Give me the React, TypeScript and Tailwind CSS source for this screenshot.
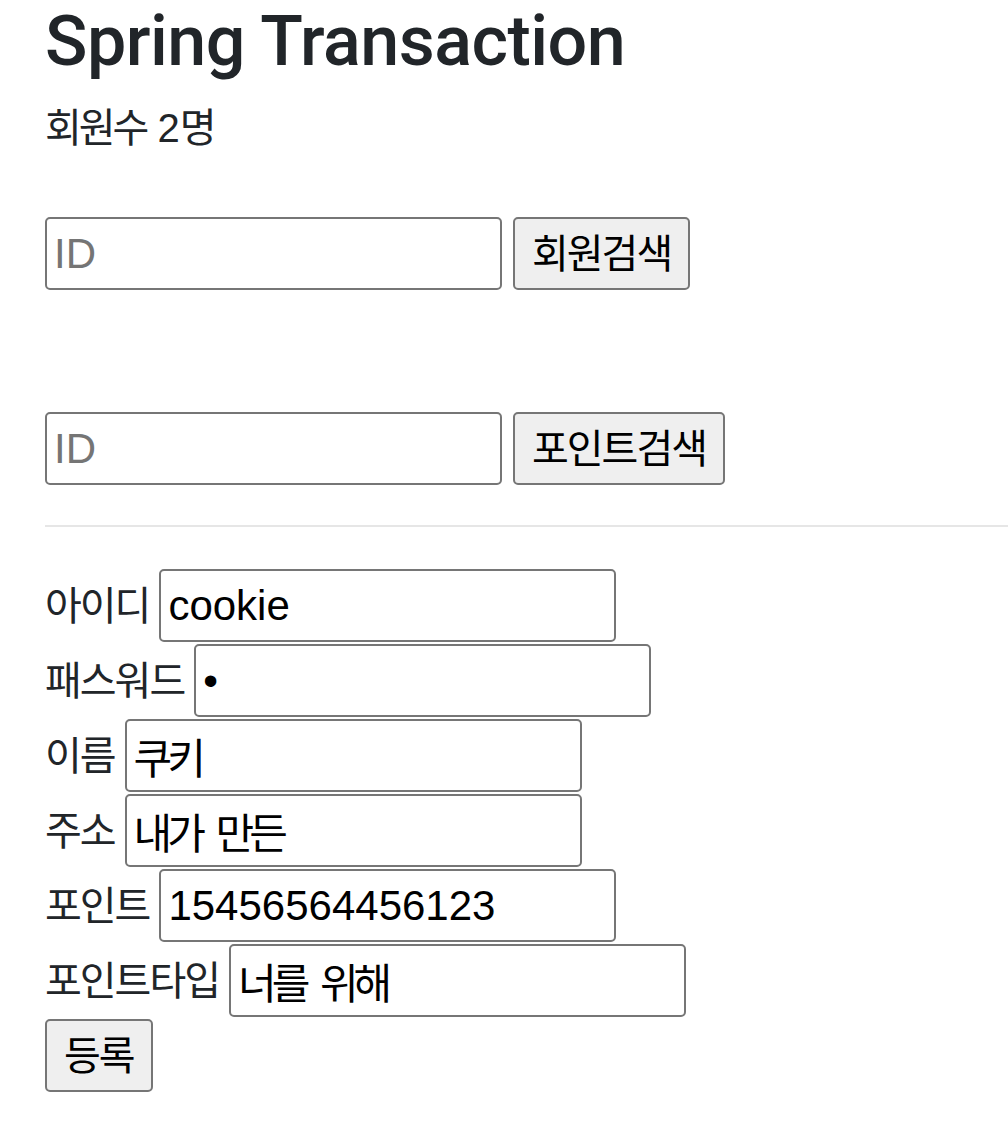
const FONT = "font-['Liberation_Sans','Noto_Sans_CJK_KR',sans-serif]"

const FIELDS = [
  { label: '아이디', value: 'cookie', type: 'text', ko: false },
  { label: '패스워드', value: 'a', type: 'password', ko: false },
  { label: '이름', value: '쿠키', type: 'text', ko: true },
  { label: '주소', value: '내가 만든', type: 'text', ko: true },
  { label: '포인트', value: '15456564456123', type: 'text', ko: false },
  { label: '포인트타입', value: '너를 위해', type: 'text', ko: true },
]

const inputCls =
  "box-border h-[73px] w-[457px] shrink-0 rounded-[5px] border-2 border-[#767676] bg-white pl-[7px] text-[42px] text-black outline-none placeholder:text-[#757575] font-['Liberation_Sans','Noto_Sans_CJK_KR',sans-serif]"

const buttonCls =
  "box-border h-[73px] shrink-0 rounded-[5px] border-2 border-[#767676] bg-[#efefef] px-[17px] text-[40px] text-black font-['Liberation_Sans','Noto_Sans_CJK_KR',sans-serif]"

function Ko({ children }: { children: string }) {
  // Hangul in the reference is a bit narrower than Noto's advance.
  return <span className="tracking-[-2px]">{children}</span>
}

function SearchRow({ label }: { label: string }) {
  return (
    <div className="flex items-center gap-[11px]">
      <input className={inputCls} placeholder="ID" />
      <button className={buttonCls}>
        <Ko>{label}</Ko>
      </button>
    </div>
  )
}

export default function App() {
  return (
    <div className={`${FONT} min-h-[1130px] bg-white pl-[45px] text-[#212529]`}>
      <h1 className="font-['Roboto','Liberation_Sans',sans-serif] text-[70px] font-medium leading-[82px] tracking-[-0.5px]">
        Spring Transaction
      </h1>
      <p className="mt-[16px] text-[40px] leading-[60px]">
        <span className="tracking-[-3px]">회원수</span> 2<Ko>명</Ko>
      </p>

      <div className="mt-[59px]">
        <SearchRow label="회원검색" />
      </div>
      <div className="mt-[122px]">
        <SearchRow label="포인트검색" />
      </div>

      <hr className="mt-[40px] h-[2px] border-0 bg-[#e6e6e6]" />

      <form className="mt-[42px] flex flex-col gap-[2px]" onSubmit={(e) => e.preventDefault()}>
        {FIELDS.map((f) => (
          <div key={f.label} className="flex items-center gap-[10px] text-[40px]">
            <label className="leading-[60px]">
              <Ko>{f.label}</Ko>
            </label>
            <input
              className={`${inputCls} ${f.ko ? 'tracking-[-5px] [word-spacing:8px]' : ''}`}
              type={f.type}
              defaultValue={f.value}
            />
          </div>
        ))}
        <div>
          <button className={buttonCls}>
            <Ko>등록</Ko>
          </button>
        </div>
      </form>
    </div>
  )
}
